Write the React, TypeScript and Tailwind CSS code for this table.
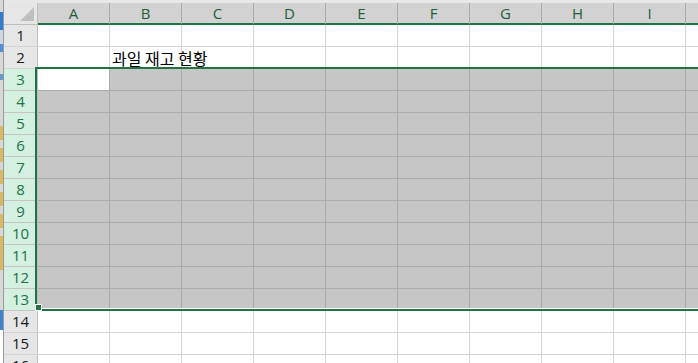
import React from 'react';

const COLS = ['A', 'B', 'C', 'D', 'E', 'F', 'G', 'H', 'I', 'J'];
const ROWS = Array.from({ length: 16 }, (_, i) => i + 1);
const SEL_FIRST = 3;
const SEL_LAST = 13;

// slivers of the window behind the workbook, top to bottom
const EDGE = [
  { h: 12, c: '#d8d8d8' },
  { h: 18, c: '#2f7dd1' },
  { h: 14, c: '#cfd6de' },
  { h: 8, c: '#4f8fd6' },
  { h: 22, c: '#d8d8d8' },
  { h: 6, c: '#6a98c8' },
  { h: 46, c: '#d8d8d8' },
  { h: 14, c: '#d8b860' },
  { h: 8, c: '#d8d8d8' },
  { h: 14, c: '#d8b860' },
  { h: 8, c: '#d8d8d8' },
  { h: 14, c: '#d8b860' },
  { h: 8, c: '#d8d8d8' },
  { h: 14, c: '#d8b860' },
  { h: 8, c: '#d8d8d8' },
  { h: 14, c: '#d8b860' },
  { h: 8, c: '#d8d8d8' },
  { h: 34, c: '#d8b860' },
  { h: 40, c: '#d8d8d8' },
  { h: 20, c: '#3d84cf' },
];

function RowHeader({ n }: { n: number }) {
  const sel = n >= SEL_FIRST && n <= SEL_LAST;
  return (
    <div
      className={
        sel
          ? 'w-[34px] h-[22px] shrink-0 flex items-center justify-center border-r border-b border-r-[#bdbdbd] border-b-[#c9c4c4] bg-[#d3f0e0] text-[#217346]'
          : 'w-[34px] h-[22px] shrink-0 flex items-center justify-center border-r border-b border-r-[#bdbdbd] border-b-[#d4d4d4] bg-[#e6e6e6] text-[#1a1a1a]'
      }
    >
      {n}
    </div>
  );
}

function Cell({ row, col }: { row: number; col: string }) {
  const sel = row >= SEL_FIRST && row <= SEL_LAST;
  const active = row === SEL_FIRST && col === 'A';
  let cls = 'w-[72px] h-[22px] shrink-0 border-r border-b border-[#d4d4d4] bg-white';
  if (sel && !active) cls = 'w-[72px] h-[22px] shrink-0 border-r border-b border-[#ababab] bg-[#c6c6c6]';
  if (active) cls = 'w-[72px] h-[22px] shrink-0 border-r border-b border-[#ababab] bg-white';
  const title = row === 2 && col === 'B';
  return (
    <div className={cls + (title ? ' relative z-10' : '')}>
      {title && (
        <span className="absolute left-[2px] top-[1px] whitespace-nowrap text-[16px] leading-[20px] text-black [font-family:'Noto_Sans_CJK_KR','Noto_Sans',sans-serif]">
          과일 재고 현황
        </span>
      )}
    </div>
  );
}

export default function App() {
  return (
    <div className="w-[698px] h-[363px] overflow-hidden bg-white flex text-[15px] [font-family:'Open_Sans','Noto_Sans_CJK_KR',sans-serif]">
      <div className="w-[4px] shrink-0 flex flex-col border-r border-[#9a9a9a]">
        {EDGE.map((s, i) => (
          <div key={i} style={{ height: s.h, background: s.c }} />
        ))}
      </div>

      <div className="relative flex-1 flex flex-col overflow-hidden">
        <div className="h-[3px] shrink-0 bg-[#e8e8e8]" />

        {/* column headers */}
        <div className="h-[22px] shrink-0 flex">
          <div className="w-[34px] h-[22px] shrink-0 flex items-end justify-end pr-[3px] pb-[3px] bg-[#e6e6e6] border-r border-b border-[#bdbdbd]">
            <svg width="14" height="14" viewBox="0 0 14 14">
              <path d="M14 0 L14 14 L0 14 Z" fill="#bfbfbf" />
            </svg>
          </div>
          {COLS.map((c) => (
            <div
              key={c}
              className="w-[72px] h-[22px] shrink-0 flex items-center justify-center bg-[#d2d2d2] border-r border-r-[#ababab] border-b-2 border-b-[#217346] text-[#1c5e38] pt-[1px]"
            >
              {c}
            </div>
          ))}
        </div>

        {ROWS.map((r) => (
          <div key={r} className="h-[22px] shrink-0 flex">
            <RowHeader n={r} />
            {COLS.map((c) => (
              <Cell key={c} row={r} col={c} />
            ))}
          </div>
        ))}

        {/* selection outline for rows 3:13 */}
        <div className="absolute z-20 left-[31px] top-[67px] w-[700px] h-[244px] border-2 border-[#217346] shadow-[inset_0_-1px_0_white] pointer-events-none" />
        <div className="absolute z-20 left-[31px] top-[304px] w-[7px] h-[7px] bg-[#217346] border border-white" />
      </div>
    </div>
  );
}
